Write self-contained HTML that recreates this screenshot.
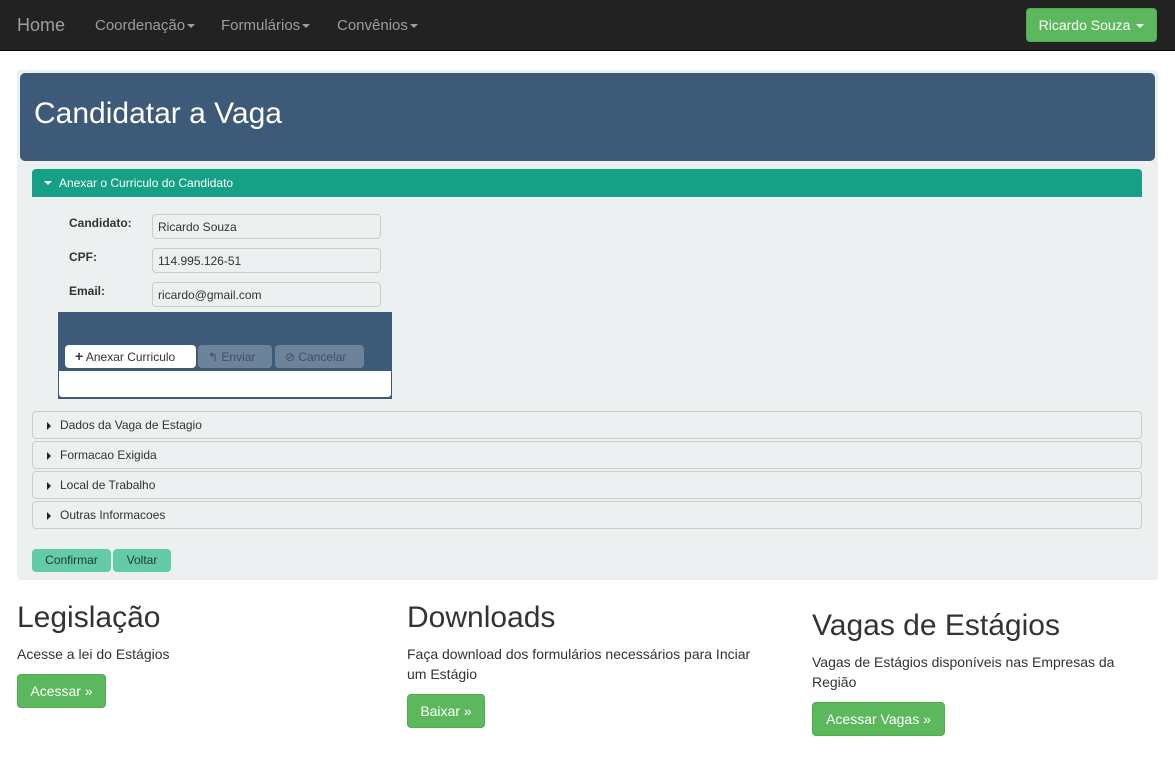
<!DOCTYPE html>
<html><head><meta charset="utf-8"><style>
*{box-sizing:border-box;margin:0;padding:0}
body{width:1175px;height:763px;background:#fff;font-family:"Liberation Sans",sans-serif;color:#333;position:relative;overflow:hidden}
.a{position:absolute}
.nav{left:0;top:0;width:1175px;height:51px;background:#222;border-bottom:1px solid #080808}
.nl{color:#9d9d9d;font-size:15px;top:17px}
.car{display:inline-block;width:0;height:0;border-left:4px solid transparent;border-right:4px solid transparent;border-top:4px solid currentColor;vertical-align:middle;margin-left:2px}
.btn{background:#5cb85c;border:1px solid #4cae4c;border-radius:4px;color:#fff;font-size:15px;text-align:center}
.inp{left:152px;width:229px;height:25px;border:1px solid #ccc;border-radius:4px;background:#ecf0f1;font-size:12px;padding:5px 5px;color:#333}
.lbl{left:69px;font-size:12px;font-weight:bold;color:#333}
.acc{left:32px;width:1110px;height:28px;border:1px solid #ccc;border-radius:4px;background:#ecf0f1;font-size:12px;padding:6px 0 0 27px;color:#333}
.acc:before{content:"";position:absolute;left:14px;top:10px;border-top:4px solid transparent;border-bottom:4px solid transparent;border-left:4px solid #222}
h2{font-weight:normal;font-size:30px;color:#333}
p{font-size:14px;line-height:20px}
</style></head><body>
<div class="a nav"></div>
<div class="a" style="left:17px;top:15px;color:#9d9d9d;font-size:18px">Home</div>
<div class="a nl" style="left:95px">Coordenação<span class="car"></span></div>
<div class="a nl" style="left:221px">Formulários<span class="car"></span></div>
<div class="a nl" style="left:337px">Convênios<span class="car"></span></div>
<div class="a btn" style="left:1026px;top:8px;width:131px;height:34px;padding-top:8px;font-size:14px">Ricardo Souza <span class="car"></span></div>

<div class="a" style="left:17px;top:70px;width:1141px;height:510px;background:#ecf0f1;border-radius:4px"></div>
<div class="a" style="left:20px;top:73px;width:1135px;height:88px;background:#3d5a78;border-radius:5px"></div>
<div class="a" style="left:34px;top:97px;color:#fff;font-size:30px">Candidatar a Vaga</div>
<div class="a" style="left:32px;top:169px;width:1110px;height:28px;background:#16a085;border-radius:4px 4px 0 0;color:#fff;font-size:12px;padding:7px 0 0 27px"><span style="position:absolute;left:12px;top:12px;border-left:4px solid transparent;border-right:4px solid transparent;border-top:4px solid #fff"></span>Anexar o Curriculo do Candidato</div>

<div class="a lbl" style="top:216px">Candidato:</div>
<div class="a inp" style="top:214px">Ricardo Souza</div>
<div class="a lbl" style="top:250px">CPF:</div>
<div class="a inp" style="top:248px">114.995.126-51</div>
<div class="a lbl" style="top:284px">Email:</div>
<div class="a inp" style="top:282px">ricardo@gmail.com</div>

<div class="a" style="left:58px;top:312px;width:334px;height:87px;background:#3d5a78"></div>
<div class="a" style="left:59px;top:371px;width:332px;height:26px;background:#fff;border-radius:0 0 3px 3px"></div>
<div class="a" style="left:65px;top:345px;width:131px;height:23px;background:#fff;border-radius:4px;font-size:12px;padding:5px 0 0 10px;color:#333"><b style="font-size:14px;line-height:10px">+</b> Anexar Curriculo</div>
<div class="a" style="left:198px;top:345px;width:74px;height:23px;background:#6d8399;border-radius:4px;font-size:12px;padding:5px 0 0 10px;color:#3d5068">↰ Enviar</div>
<div class="a" style="left:275px;top:345px;width:89px;height:23px;background:#6d8399;border-radius:4px;font-size:12px;padding:5px 0 0 10px;color:#3d5068">⊘ Cancelar</div>

<div class="a acc" style="top:411px">Dados da Vaga de Estagio</div>
<div class="a acc" style="top:441px">Formacao Exigida</div>
<div class="a acc" style="top:471px">Local de Trabalho</div>
<div class="a acc" style="top:501px">Outras Informacoes</div>

<div class="a" style="left:32px;top:549px;width:79px;height:23px;background:#63cca6;border-radius:4px;font-size:12px;color:#1f3b33;text-align:center;padding-top:4px">Confirmar</div>
<div class="a" style="left:113px;top:549px;width:58px;height:23px;background:#63cca6;border-radius:4px;font-size:12px;color:#1f3b33;text-align:center;padding-top:4px">Voltar</div>

<h2 class="a" style="left:17px;top:601px">Legislação</h2>
<p class="a" style="left:17px;top:644px">Acesse a lei do Estágios</p>
<div class="a btn" style="left:17px;top:674px;width:89px;height:34px;padding-top:8px;font-size:14px">Acessar »</div>

<h2 class="a" style="left:407px;top:601px">Downloads</h2>
<p class="a" style="left:407px;top:644px;width:360px">Faça download dos formulários necessários para Inciar um Estágio</p>
<div class="a btn" style="left:407px;top:694px;width:78px;height:34px;padding-top:8px;font-size:14px">Baixar »</div>

<h2 class="a" style="left:812px;top:609px">Vagas de Estágios</h2>
<p class="a" style="left:812px;top:652px;width:330px">Vagas de Estágios disponíveis nas Empresas da Região</p>
<div class="a btn" style="left:812px;top:702px;width:133px;height:34px;padding-top:8px;font-size:14px">Acessar Vagas »</div>
</body></html>
